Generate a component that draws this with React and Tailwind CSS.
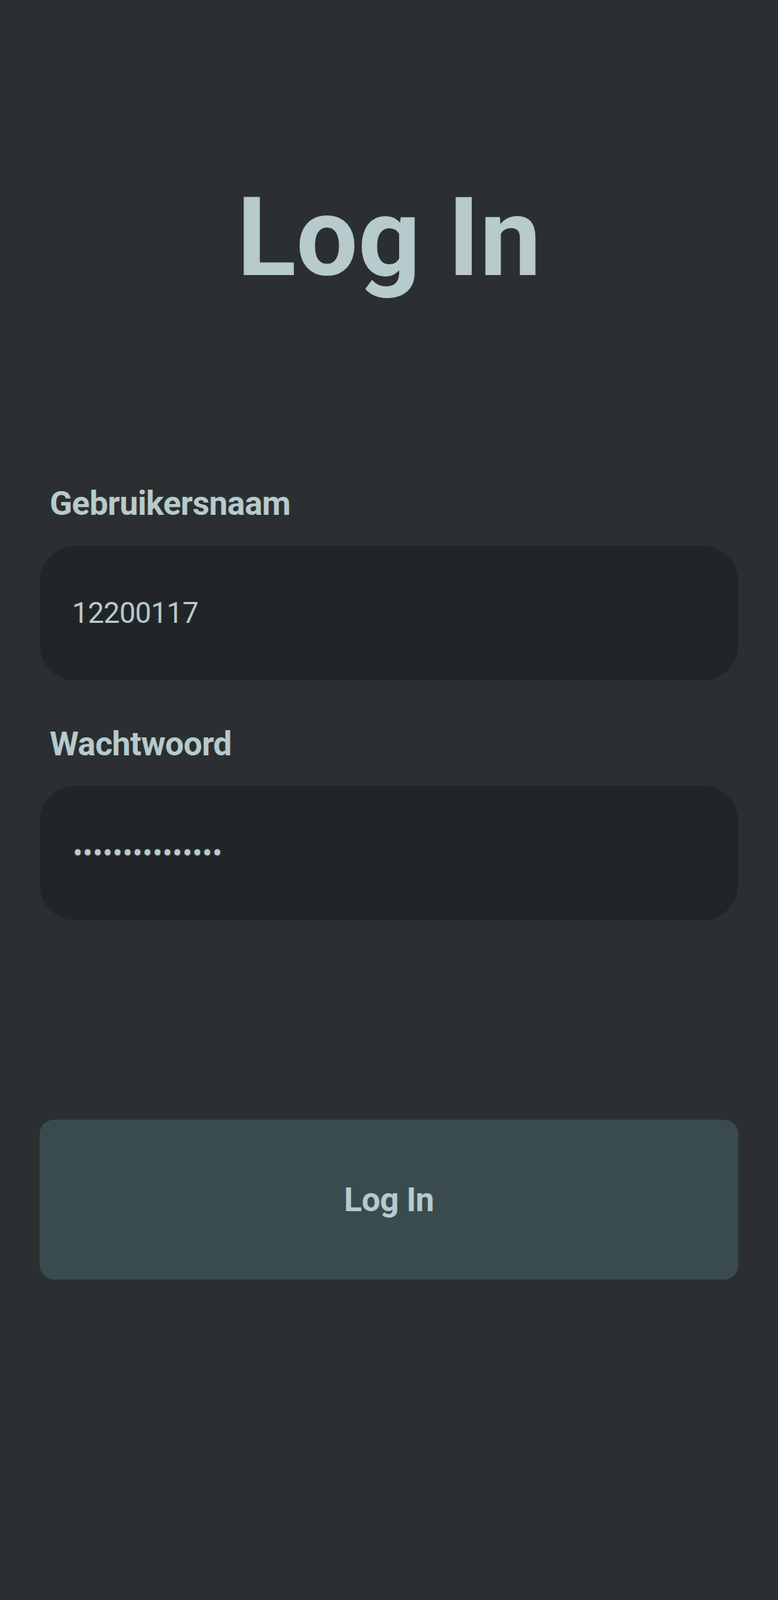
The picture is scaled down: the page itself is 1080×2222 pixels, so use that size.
export default function App() {
  return (
    <div className="min-h-[2222px] w-full bg-[#2b2f31] px-[55px] pt-[254px] font-['Roboto',sans-serif] text-[#b7cacc]">
      <h1 className="text-center text-[152px] font-bold leading-none">Log In</h1>

      <div className="mt-[270px]">
        <label className="block pl-[14px] text-[46px] font-bold leading-none tracking-[-0.5px]">Gebruikersnaam</label>
        <input
          type="text"
          readOnly
          value="12200117"
          className="mt-[36px] block h-[187px] w-full rounded-[50px] bg-[#222527] pl-[45px] text-[40px] tracking-[-0.6px] text-[#b7cacc] outline-none"
        />

        <label className="mt-[65px] block pl-[14px] text-[46px] font-bold leading-none tracking-[-0.5px]">Wachtwoord</label>
        <input
          type="password"
          readOnly
          value="123456789012345"
          className="mt-[35px] block h-[187px] w-full rounded-[50px] bg-[#222527] pl-[46px] text-[41px] text-[#b7cacc] outline-none"
        />
      </div>

      <button className="mt-[277px] flex h-[222px] w-full items-center justify-center rounded-[20px] bg-[#394b4f] text-[46px] font-bold tracking-[-0.5px] text-[#b7cacc]">
        Log In
      </button>
    </div>
  );
}
